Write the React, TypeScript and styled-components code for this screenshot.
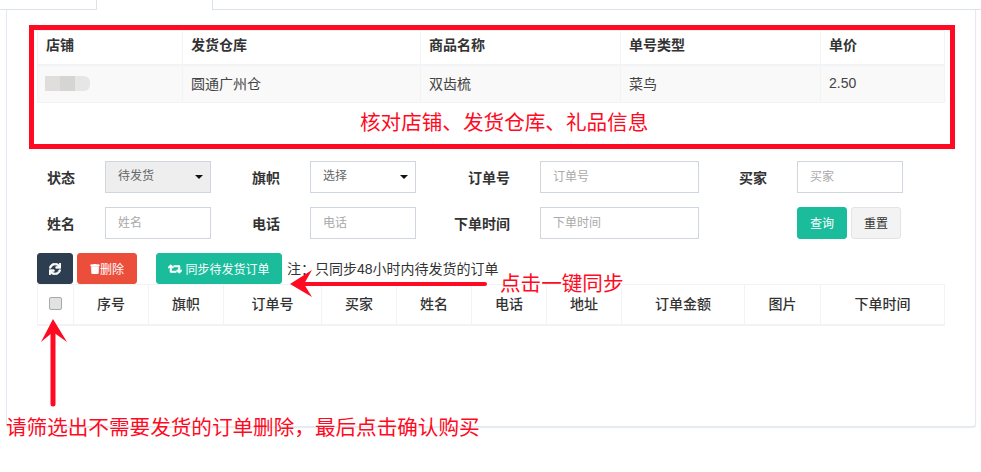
import React from "react";
import styled, { createGlobalStyle } from "styled-components";
import { FaSync, FaTrash, FaRetweet } from "react-icons/fa";

const Global = createGlobalStyle`
  html, body { margin: 0; padding: 0; background: #fff; }
  body { font-family: "Liberation Sans", "Noto Sans CJK SC", sans-serif; color: #333; }
`;

const Page = styled.div`
  position: relative;
  width: 981px;
  height: 472px;
  overflow: hidden;
`;

const TabBar = styled.div`
  display: flex;
  height: 10px;
  padding-left: 96px;
  box-sizing: border-box;
  border-bottom: 1px solid #dde3ea;
`;

const Tab = styled.div`
  width: 117px;
  height: 10px;
  box-sizing: border-box;
  background: #fff;
  border-left: 1px solid #dde3ea;
  border-right: 1px solid #dde3ea;
`;

const Panel = styled.div`
  width: 970px;
  height: 417px;
  margin-left: 6px;
  box-sizing: border-box;
  background: #fff;
  border: 1px solid #e4eaf1;
  border-top: none;
  border-radius: 0 0 3px 3px;
  box-shadow: 0 1px 1px rgba(200, 215, 230, 0.5);
  padding: 15px 0 0 22px;
`;

const RedBox = styled.div`
  width: 926px;
  height: 124px;
  box-sizing: border-box;
  border: 5px solid #ff0a23;
  padding: 0 5px 0 3px;
`;

const Table = styled.table`
  width: 907px;
  table-layout: fixed;
  border-collapse: collapse;
`;

const Col = styled.col<{ $w: number }>`
  width: ${(p) => p.$w}px;
`;

const Th = styled.th<{ $center?: boolean; $h: number }>`
  height: ${(p) => p.$h}px;
  box-sizing: border-box;
  padding: 0 ${(p) => (p.$center ? "0 3px" : "8px 7px")};
  font-size: 14px;
  font-weight: ${(p) => (p.$center ? 500 : 700)};
  color: #333;
  text-align: ${(p) => (p.$center ? "center" : "left")};
  border: 1px solid #f1f3f5;
  border-bottom-width: 2px;
`;

const Td = styled.td`
  height: 38px;
  box-sizing: border-box;
  padding: 0 8px 1px;
  font-size: 14px;
  color: #444;
  background: #f9f9f9;
  border: 1px solid #f1f3f5;
`;

const Blurred = styled.div`
  display: flex;
  width: 45px;
  height: 15px;
  margin-left: -1px;
  overflow: hidden;
  border-radius: 0 6px 6px 0;
`;

const BlurBlock = styled.span<{ $c: string }>`
  flex: 1;
  background: ${(p) => p.$c};
`;

const RedNote = styled.div`
  padding: 6px 0 0 323px;
  font-size: 20.6px;
  line-height: 28px;
  color: #ff0a23;
  white-space: nowrap;
`;

const Form = styled.div`
  display: grid;
  grid-template-columns: 68px 106px 99px 106px 124px 159px 98px 106px;
  grid-auto-rows: 32px;
  row-gap: 14px;
  width: 866px;
  margin: 12px 0 0 8px;
`;

const Label = styled.label`
  padding-right: 30px;
  font-size: 14px;
  font-weight: 700;
  line-height: 34px;
  text-align: right;
  white-space: nowrap;
  color: #333;
`;

const Input = styled.input`
  width: 100%;
  height: 32px;
  box-sizing: border-box;
  padding: 0 12px 1px;
  border: 1px solid #cfd6de;
  border-radius: 0;
  outline: none;
  font: 12px "Liberation Sans", "Noto Sans CJK SC", sans-serif;
  &::placeholder { color: #a9a9a9; opacity: 1; }
`;

const SelectWrap = styled.div`
  position: relative;
  height: 32px;
  &::after {
    content: "";
    position: absolute;
    right: 8px;
    top: 14px;
    border-left: 4px solid transparent;
    border-right: 4px solid transparent;
    border-top: 4px solid #111;
  }
`;

const Select = styled.select<{ $locked?: boolean }>`
  appearance: none;
  width: 100%;
  height: 32px;
  box-sizing: border-box;
  padding: 0 12px 2px;
  border: 1px solid #cfd6de;
  border-radius: 0;
  outline: none;
  opacity: 1;
  color: #666;
  background: ${(p) => (p.$locked ? "#eee" : "#fff")};
  font: 12px "Liberation Sans", "Noto Sans CJK SC", sans-serif;
`;

const Actions = styled.div`
  display: flex;
  gap: 4px;
`;

const Btn = styled.button<{ $bg: string; $fg?: string; $w: number; $line?: string }>`
  display: inline-flex;
  align-items: center;
  justify-content: center;
  gap: 3px;
  width: ${(p) => p.$w}px;
  height: 31px;
  padding: 0;
  box-sizing: border-box;
  border: 1px solid ${(p) => p.$line ?? p.$bg};
  border-radius: 3px;
  background: ${(p) => p.$bg};
  color: ${(p) => p.$fg ?? "#fff"};
  font: 12px "Liberation Sans", "Noto Sans CJK SC", sans-serif;
  svg {
    stroke: currentColor;
    stroke-width: 30;
  }
`;

const SmallBtn = styled(Btn)`
  height: 32px;
  padding-bottom: 2px;
`;

const Toolbar = styled.div`
  display: flex;
  align-items: center;
  width: 908px;
  margin: 14px 0 0 8px;
`;

const DeleteBtn = styled(Btn)`
  margin-left: 4px;
  gap: 0;
`;

const SyncBtn = styled(Btn)`
  margin-left: 19px;
`;

const Note = styled.span`
  margin: 0 0 2px 5px;
  font-size: 14px;
  color: #333;
`;

const OrderBlock = styled.div`
  margin-left: 8px;
`;

const Check = styled.input`
  appearance: none;
  display: block;
  width: 13px;
  height: 13px;
  margin: 3px auto 2px;
  border: 1px solid #a8a8a8;
  border-radius: 2px;
  background: #e2e2e2;
`;

const Callout = styled.div<{ $x: number; $y: number }>`
  position: absolute;
  left: ${(p) => p.$x}px;
  top: ${(p) => p.$y}px;
  font-size: 20.6px;
  line-height: 28px;
  color: #ff0a23;
  white-space: nowrap;
`;

const ArrowLayer = styled.svg`
  position: absolute;
  left: 0;
  top: 0;
  pointer-events: none;
`;

const heads1 = ["店铺", "发货仓库", "商品名称", "单号类型", "单价"];
const cells1 = ["圆通广州仓", "双齿梳", "菜鸟", "2.50"];
const widths1 = [145, 238, 200, 200, 124];
const heads2 = ["序号", "旗帜", "订单号", "买家", "姓名", "电话", "地址", "订单金额", "图片", "下单时间"];
const widths2 = [36, 75, 75, 98, 75, 75, 75, 75, 123, 76, 124];

export default function App() {
  return (
    <Page>
      <Global />
      <TabBar>
        <Tab />
      </TabBar>
      <Panel>
        <RedBox>
          <Table>
            <colgroup>
              {widths1.map((w, i) => (
                <Col key={i} $w={w} />
              ))}
            </colgroup>
            <thead>
              <tr>
                {heads1.map((h) => (
                  <Th key={h} $h={34}>{h}</Th>
                ))}
              </tr>
            </thead>
            <tbody>
              <tr>
                <Td>
                  <Blurred>
                    <BlurBlock $c="#dfdedd" />
                    <BlurBlock $c="#d5d5d4" />
                    <BlurBlock $c="#e5e6e5" />
                  </Blurred>
                </Td>
                {cells1.map((c) => (
                  <Td key={c}>{c}</Td>
                ))}
              </tr>
            </tbody>
          </Table>
          <RedNote>核对店铺、发货仓库、礼品信息</RedNote>
        </RedBox>

        <Form>
          <Label>状态</Label>
          <SelectWrap>
            <Select $locked disabled defaultValue="待发货">
              <option>待发货</option>
            </Select>
          </SelectWrap>
          <Label>旗帜</Label>
          <SelectWrap>
            <Select defaultValue="选择">
              <option>选择</option>
            </Select>
          </SelectWrap>
          <Label>订单号</Label>
          <Input placeholder="订单号" />
          <Label>买家</Label>
          <Input placeholder="买家" />
          <Label>姓名</Label>
          <Input placeholder="姓名" />
          <Label>电话</Label>
          <Input placeholder="电话" />
          <Label>下单时间</Label>
          <Input placeholder="下单时间" />
          <span />
          <Actions>
            <SmallBtn $bg="#1abc9c" $w={50}>查询</SmallBtn>
            <SmallBtn $bg="#f3f3f3" $fg="#333" $line="#e4e4e4" $w={50}>重置</SmallBtn>
          </Actions>
        </Form>

        <Toolbar>
          <Btn $bg="#2c3e50" $w={36}><FaSync size={12} /></Btn>
          <DeleteBtn $bg="#ec4e3c" $w={60}><FaTrash size={10} />删除</DeleteBtn>
          <SyncBtn $bg="#1abc9c" $w={126}><FaRetweet size={14} />同步待发货订单</SyncBtn>
          <Note>注：只同步48小时内待发货的订单</Note>
        </Toolbar>

        <OrderBlock>
          <Table>
            <colgroup>
              {widths2.map((w, i) => (
                <Col key={i} $w={w} />
              ))}
            </colgroup>
            <thead>
              <tr>
                <Th $center $h={40}>
                  <Check type="checkbox" aria-label="全选" />
                </Th>
                {heads2.map((h) => (
                  <Th key={h} $center $h={40}>{h}</Th>
                ))}
              </tr>
            </thead>
          </Table>
        </OrderBlock>
      </Panel>

      <Callout $x={500} $y={270}>点击一键同步</Callout>
      <Callout $x={6} $y={414}>请筛选出不需要发货的订单删除，最后点击确认购买</Callout>

      <ArrowLayer width="981" height="472" viewBox="0 0 981 472">
        <line x1="304" y1="284" x2="485" y2="284" stroke="#ff0a23" strokeWidth="4" strokeLinecap="round" />
        <polygon points="290,284 312,270 304,284 312,297" fill="#ff0a23" />
        <line x1="53" y1="332" x2="53" y2="404" stroke="#ff0a23" strokeWidth="5" strokeLinecap="round" />
        <polygon points="53,319 67,342 53,332 41,342" fill="#ff0a23" />
      </ArrowLayer>
    </Page>
  );
}
